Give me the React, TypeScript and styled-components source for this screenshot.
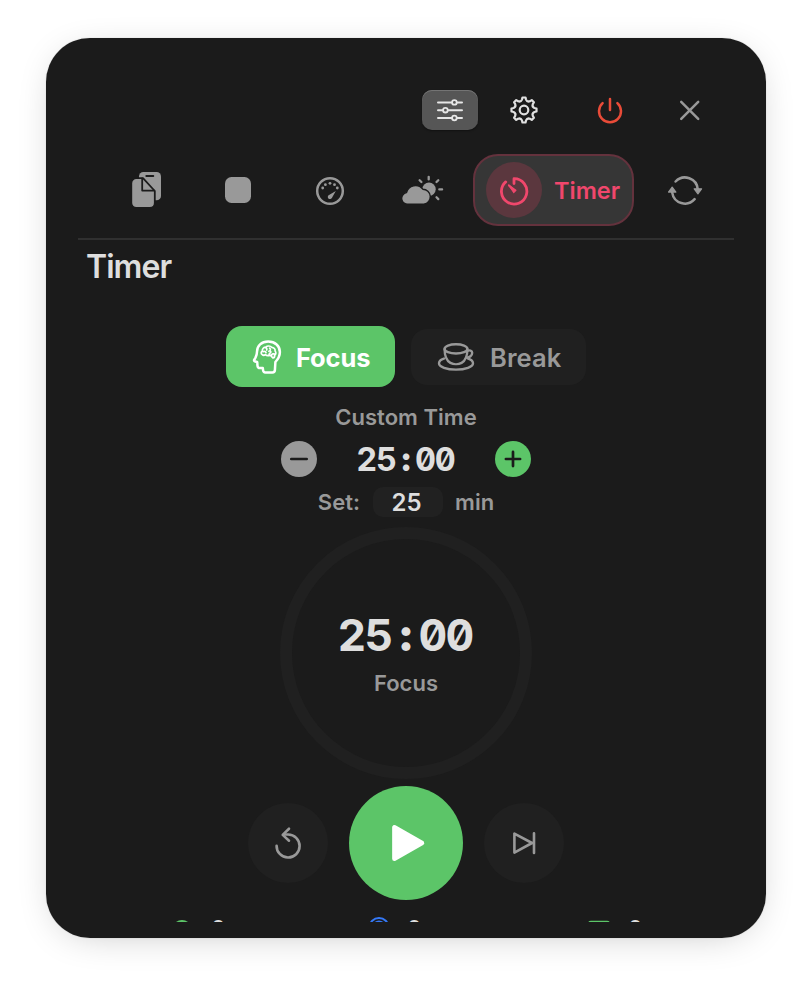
import React from "react";
import styled, { createGlobalStyle } from "styled-components";

const SURFACE = "#1b1b1b";
const MUTED = "#999999";
const BRIGHT = "#dedede";
const GREEN = "#5cc568";
const PINK = "#f0476c";

const GlobalStyle = createGlobalStyle`
  * { box-sizing: border-box; }
  html, body { margin: 0; background: #fff; }
  body { font-family: Inter, "Liberation Sans", sans-serif; overflow: hidden; }
  button { font: inherit; border: 0; padding: 0; background: none; color: inherit; }
`;

const Desktop = styled.div`
  width: 812px;
  height: 992px;
  padding: 38px 46px;
  background: #fff;
  overflow: hidden;
`;

const Window = styled.main`
  width: 720px;
  height: 900px;
  padding: 52px 32px 16px;
  border-radius: 44px;
  background: ${SURFACE};
  display: flex;
  flex-direction: column;
  overflow: hidden;
`;

const Shadow = styled.div`
  width: 720px;
  height: 900px;
  border-radius: 44px;
  box-shadow: 0 0 1px rgba(0, 0, 0, 0.3), 0 6px 40px -16px rgba(0, 0, 0, 0.32);
`;

const Toolbar = styled.header`
  height: 40px;
  flex: none;
  display: flex;
  padding-left: 344px;
`;

const ToolButton = styled.button<{ $active?: boolean; $gap?: number }>`
  width: 56px;
  height: 40px;
  flex: none;
  display: flex;
  align-items: center;
  justify-content: center;
  border-radius: 10px;
  background: ${(p) => (p.$active ? "#565656" : "transparent")};
  box-shadow: ${(p) => (p.$active ? "inset 0 1px 0 #747474, 0 1px 2px rgba(0,0,0,.4)" : "none")};
  margin-left: ${(p) => p.$gap ?? 0}px;
`;

const Tabs = styled.nav`
  height: 72px;
  flex: none;
  margin-top: 24px;
  padding-left: 22px;
  display: flex;
  align-items: center;
`;

const Tab = styled.button<{ $width?: number }>`
  width: ${(p) => p.$width ?? 92}px;
  height: 72px;
  flex: none;
  display: flex;
  align-items: center;
  justify-content: center;
`;

const ActiveTab = styled.button`
  width: 161px;
  height: 72px;
  flex: none;
  margin-left: 3px;
  padding: 0 0 0 11px;
  display: flex;
  align-items: center;
  gap: 12px;
  border: 2px solid #64323d;
  border-radius: 25px;
  background: #363636;
  color: ${PINK};
  font-size: 23.5px;
  font-weight: 600;
`;

const TabBadge = styled.span`
  width: 56px;
  height: 56px;
  flex: none;
  border-radius: 50%;
  background: #5b373e;
  display: flex;
  align-items: center;
  justify-content: center;
`;

const Divider = styled.hr`
  width: 656px;
  height: 2px;
  flex: none;
  margin: 12px 0 0;
  border: 0;
  background: #303030;
`;

const Content = styled.section`
  flex: 1;
  min-height: 0;
  overflow: hidden;
  display: flex;
  flex-direction: column;
  align-items: center;
`;

const Title = styled.h1`
  align-self: stretch;
  flex: none;
  margin: 7px 0 0 8px;
  height: 40px;
  font-size: 32px;
  line-height: 40px;
  font-weight: 600;
  color: ${BRIGHT};
  letter-spacing: -0.95px;
`;

const ModeSwitch = styled.div`
  flex: none;
  margin-top: 39px;
  height: 61px;
  display: flex;
  align-items: center;
  gap: 16px;
`;

const ModeButton = styled.button<{ $active?: boolean }>`
  width: ${(p) => (p.$active ? 169 : 175)}px;
  height: ${(p) => (p.$active ? 61 : 56)}px;
  padding-left: ${(p) => (p.$active ? 25 : 26)}px;
  display: flex;
  align-items: center;
  gap: ${(p) => (p.$active ? 13 : 15)}px;
  border-radius: 16px;
  background: ${(p) => (p.$active ? GREEN : "#202020")};
  color: ${(p) => (p.$active ? "#fff" : MUTED)};
  font-size: 25.5px;
  font-weight: ${(p) => (p.$active ? 700 : 600)};
  letter-spacing: ${(p) => (p.$active ? -0.15 : 0.1)}px;
`;

const ModeLabel = styled.span`
  padding-top: 2px;
`;

const Label = styled.div<{ $top?: number }>`
  flex: none;
  margin-top: ${(p) => p.$top ?? 0}px;
  height: 28px;
  line-height: 28px;
  font-size: 22px;
  font-weight: 600;
  letter-spacing: 0.02px;
  color: ${MUTED};
`;

const Stepper = styled.div`
  flex: none;
  margin-top: 10px;
  width: 250px;
  height: 36px;
  display: flex;
  align-items: center;
  justify-content: space-between;
`;

const RoundButton = styled.button<{ $size: number; $color: string }>`
  width: ${(p) => p.$size}px;
  height: ${(p) => p.$size}px;
  flex: none;
  border-radius: 50%;
  background: ${(p) => p.$color};
  display: flex;
  align-items: center;
  justify-content: center;
`;

const ClockFace = styled.span<{ $size: number; $cell: number; $weight: number }>`
  display: grid;
  grid-template-columns: repeat(5, ${(p) => p.$cell}px);
  justify-items: center;
  font-size: ${(p) => p.$size}px;
  line-height: 1.2;
  font-weight: ${(p) => p.$weight};
  font-feature-settings: "tnum" 1, "zero" 1;
  color: ${BRIGHT};
`;

const Colon = styled.span`
  font-weight: 900;
`;

const SetRow = styled.div`
  flex: none;
  margin-top: 10px;
  height: 30px;
  display: flex;
  align-items: center;
  gap: 12.5px;
`;

const MinuteField = styled.div`
  width: 70px;
  height: 30px;
  border-radius: 10px;
  background: #212121;
  color: ${BRIGHT};
  font-size: 24px;
  line-height: 31px;
  font-weight: 600;
  text-align: center;
  padding-right: 2px;
`;

const Dial = styled.div`
  flex: none;
  margin-top: 10px;
  width: 252px;
  height: 252px;
  border: 12px solid #202020;
  border-radius: 50%;
  display: flex;
  flex-direction: column;
  align-items: center;
  padding-top: 70px;
`;

const Controls = styled.div`
  flex: none;
  margin-top: 7px;
  height: 114px;
  display: flex;
  align-items: center;
  gap: 21px;
`;

const Stats = styled.div`
  flex: none;
  align-self: stretch;
  margin-top: 14px;
  height: 30px;
  display: grid;
  grid-template-columns: 196px 219px 200px;
  padding-left: 94px;
`;

const Stat = styled.div<{ $gap: number }>`
  display: flex;
  align-items: flex-start;
  gap: ${(p) => p.$gap}px;
  color: ${BRIGHT};
  font-size: 22px;
  line-height: 28px;
  font-weight: 600;
`;

const Icon = ({ w, h, children, color = MUTED, sw = 2.2, fill = "none" }: {
  w: number; h: number; children: React.ReactNode; color?: string; sw?: number; fill?: string;
}) => (
  <svg width={w} height={h} viewBox={`0 0 ${w} ${h}`} fill={fill} stroke={color} strokeWidth={sw}
    strokeLinecap="round" strokeLinejoin="round">
    {children}
  </svg>
);

const Clock = ({ value, size, cell, weight }: { value: string; size: number; cell: number; weight: number }) => (
  <ClockFace $size={size} $cell={cell} $weight={weight}>
    {value.split("").map((ch, i) => (ch === ":" ? <Colon key={i}>:</Colon> : <span key={i}>{ch}</span>))}
  </ClockFace>
);

const polar = (deg: number, r: number) => {
  const a = (deg * Math.PI) / 180;
  return `${(14 + r * Math.sin(a)).toFixed(2)} ${(14 - r * Math.cos(a)).toFixed(2)}`;
};

const gearPath =
  Array.from({ length: 8 }, (_, i) => {
    const a = i * 45;
    return `${i ? "L" : "M"}${polar(a - 7, 12.6)}L${polar(a + 7, 12.6)}L${polar(a + 11, 10.6)}Q${polar(a + 22.5, 8.4)} ${polar(a + 34, 10.6)}`;
  }).join("") + "Z";

const SlidersIcon = () => (
  <Icon w={28} h={24} color="#e6e6e6" sw={2}>
    <path d="M2 4.4h24M2 12.2h24M2 20h24" />
    <g fill="#565656" strokeWidth={1.8}>
      <circle cx="18.4" cy="4.4" r="2.3" />
      <circle cx="9.4" cy="12.2" r="2.3" />
      <circle cx="18.4" cy="20" r="2.3" />
    </g>
  </Icon>
);

const GearIcon = () => (
  <Icon w={28} h={28} color="#e0e0e0" sw={2.2}>
    <path d={gearPath} />
    <circle cx="14" cy="14" r="4.3" />
  </Icon>
);

const PowerIcon = () => (
  <Icon w={28} h={28} color="#e94b38" sw={2.5}>
    <path d="M6.6 7.1a11 11 0 1 0 14.8 0M14 3v11" />
  </Icon>
);

const CloseIcon = () => (
  <Icon w={24} h={24} sw={2.5}><path d="M3.2 3.9l17 17M20.2 3.9l-17 17" /></Icon>
);

const DocsIcon = () => (
  <Icon w={32} h={38}>
    <rect x="9" y="1" width="22" height="28.3" rx="4.4" fill={MUTED} stroke="none" />
    <path d="M16.3 5h7" stroke={SURFACE} strokeWidth={1.9} />
    <path d="M6.5 7.2H13L24.8 20V32a5 5 0 0 1-5 5H6.5a5 5 0 0 1-5.2-5V12.2a5 5 0 0 1 5.2-5z"
      fill={MUTED} stroke={SURFACE} strokeWidth={1.8} />
    <path d="M12.2 7.5V19.6H24.3" stroke={SURFACE} strokeWidth={1.8} />
  </Icon>
);

const SquareIcon = () => (
  <Icon w={26} h={26}><rect width="26" height="26" rx="6.5" fill={MUTED} stroke="none" /></Icon>
);

const GaugeIcon = () => (
  <Icon w={30} h={31} sw={2.5}>
    <circle cx="15" cy="16" r="12.8" />
    <g fill={MUTED} stroke="none">
      <circle cx="7.7" cy="13" r="1.4" /><circle cx="10.4" cy="9.7" r="1.4" />
      <circle cx="15" cy="8.3" r="1.4" /><circle cx="19.5" cy="9.7" r="1.4" />
      <circle cx="22.3" cy="13" r="1.4" />
      <path d="M20.8 15.9L17 22.8a2.2 2.2 0 1 1-3.4-2.6z" />
    </g>
  </Icon>
);

const WeatherIcon = () => (
  <Icon w={42} h={30} sw={2.3}>
    <circle cx="27" cy="14.3" r="6.7" fill={MUTED} stroke="none" />
    <path d="M26.7 1.8v2.6M17.6 5.2l1.8 1.8M36.3 5.2l-1.8 1.8M37.300 14.4h2.8M34.500 22.300l1.8 1.8" />
    <path d="M6.5 29.1A5.8 5.8 0 0 1 4.5 17.600A9.200 9.200 0 0 1 20.8 14.2A7.500 7.500 0 0 1 22 29.100z"
      fill={MUTED} stroke={SURFACE} strokeWidth={1.4} />
  </Icon>
);

const TimerIcon = () => (
  <Icon w={32} h={32} color={PINK} sw={2.8}>
    <path d="M7.7 7.9A12.7 12.7 0 1 0 16 4.7V9.5" />
    <path d="M11 11.5l5.2 4.9" strokeWidth={2} />
    <path d="M10.6 11l7.3 5.3-2.2 2.2z" fill={PINK} strokeWidth={1.2} />
  </Icon>
);

const SyncIcon = () => (
  <Icon w={36} h={32} sw={2.5}>
    <path d="M8.6 7.5A12.9 12.9 0 0 1 30.8 15.5M27.6 25.2A12.9 12.9 0 0 1 5.2 18.6" />
    <path d="M27.2 14.8h7.400l-3.700 5zM1.500 18.100h7.400l-3.700-5z" fill={MUTED} strokeWidth={1.2} />
  </Icon>
);

const FocusIcon = () => (
  <Icon w={32} h={36} color="#fff" sw={2.5}>
    <path d="M17.2 2.6C10.5 2.6 6 6.8 6 12.8c0 2.4-.4 3.6-1.5 5.8l-1.3 2.3c-.4.8 0 1.4 1 1.6l2 .5.3 3.8c.2 1.6 1 2.3 2.5 2.3h2.8l.3 2.3c.2 1.4.9 2 2.2 2h7.2c1.4 0 2.3-.8 2.4-2.2l.5-8.2c2.8-3 4.5-6.1 4.5-10C28.9 6.8 24 2.6 17.2 2.6z" />
    <path strokeWidth={1.7} d="M11.2 15.6c-1.5-.8-1.3-3 .1-3.5-.2-2.3 1.5-4 3.5-3.9 1.6-1.7 4.6-1.5 5.9.1 2.3.1 3.7 1.9 3.4 3.7 1.2 1.5.9 3.5-.5 4.1.2 1.5-.5 2.7-1.7 2.9l-2.6-2.8c-2.2.8-3.9.5-5-.6-1 .8-2.2.8-3.1 0zM14.6 8.8c1.2.4 1.5 1.3 1.1 2.2M12 12.7c1.5-.6 2.6-.2 3 .9M18.6 9.2c1.500 1.200.8 2.700-.7 3.100M18 15.200l1.900-2.200M20.500 17c-.2-1.900 1.600-2.600 3-1.900" />
  </Icon>
);

const CupIcon = () => (
  <Icon w={38} h={30} sw={2.4}>
    <path d="M6.9 16.600C3.500 17.600 2 19.400 2 21.300c0 3.500 7.600 6.300 17 6.300s17-2.800 17-6.300c0-1.900-1.500-3.500-4.900-4.600" />
    <ellipse cx="19" cy="6.900" rx="11.400" ry="4.600" />
    <path d="M7.600 7.100c0 6.800 1.200 11.300 5.800 13.800 3.100 1.600 8.100 1.600 11.200 0 4.600-2.500 5.800-7 5.800-13.800" />
    <path d="M30.400 8.900c2-1.100 4.800-.3 4.800 1.900 0 2.700-2.500 4.900-6 4.800" />
  </Icon>
);

const ResetIcon = () => (
  <Icon w={32} h={34} sw={2.6}>
    <path d="M4.6 19.7A11.5 11.5 0 1 0 16 8.5H12" /><path d="M17 2.7L10.7 8.9 17 14.7" />
  </Icon>
);

const SkipIcon = () => (
  <Icon w={28} h={28} sw={2.6}>
    <path d="M4.4 4.6v19L22 14zM24 4.3v19.7" />
  </Icon>
);

const PlayIcon = () => (
  <Icon w={40} h={40} color="#fff" fill="#fff" sw={4.5}>
    <path d="M8.4 4.3v31.400L36 20z" />
  </Icon>
);

const App = () => (
  <Desktop>
    <GlobalStyle />
    <Shadow>
      <Window>
        <Toolbar>
          <ToolButton $active aria-label="Options"><SlidersIcon /></ToolButton>
          <ToolButton $gap={17.5} aria-label="Settings"><GearIcon /></ToolButton>
          <ToolButton $gap={30.5} aria-label="Quit"><PowerIcon /></ToolButton>
          <ToolButton $gap={23.5} aria-label="Close"><CloseIcon /></ToolButton>
        </Toolbar>
        <Tabs>
          <Tab aria-label="Clipboard"><DocsIcon /></Tab>
          <Tab aria-label="Apps"><SquareIcon /></Tab>
          <Tab aria-label="System"><GaugeIcon /></Tab>
          <Tab $width={94} aria-label="Weather"><WeatherIcon /></Tab>
          <ActiveTab><TabBadge><TimerIcon /></TabBadge>Timer</ActiveTab>
          <Tab $width={102} aria-label="Sync"><SyncIcon /></Tab>
        </Tabs>
        <Divider />
        <Content>
          <Title>Timer</Title>
          <ModeSwitch>
            <ModeButton $active><FocusIcon /><ModeLabel>Focus</ModeLabel></ModeButton>
            <ModeButton><CupIcon /><ModeLabel>Break</ModeLabel></ModeButton>
          </ModeSwitch>
          <Label $top={16}>Custom Time</Label>
          <Stepper>
            <RoundButton $size={36} $color={MUTED} aria-label="Decrease">
              <Icon w={20} h={20} color={SURFACE} sw={2.7}><path d="M2.3 10h15.4" /></Icon>
            </RoundButton>
            <Clock value="25:00" size={32.5} cell={19.6} weight={650} />
            <RoundButton $size={36} $color={GREEN} aria-label="Increase">
              <Icon w={20} h={20} color={SURFACE} sw={2.7}><path d="M2.9 10h14.2M10 2.9v14.2" /></Icon>
            </RoundButton>
          </Stepper>
          <SetRow>
            <Label>Set:</Label>
            <MinuteField>25</MinuteField>
            <Label>min</Label>
          </SetRow>
          <Dial>
            <Clock value="25:00" size={44.5} cell={27} weight={750} />
            <Label $top={6.5}>Focus</Label>
          </Dial>
          <Controls>
            <RoundButton $size={80} $color="#202020" aria-label="Reset"><ResetIcon /></RoundButton>
            <RoundButton $size={114} $color={GREEN} aria-label="Start"><PlayIcon /></RoundButton>
            <RoundButton $size={80} $color="#202020" aria-label="Skip"><SkipIcon /></RoundButton>
          </Controls>
          <Stats>
            <Stat $gap={19}>
              <Icon w={20} h={28}><circle cx="10" cy="16" r="10" fill={GREEN} stroke="none" /></Icon>0
            </Stat>
            <Stat $gap={17}>
              <Icon w={22} h={28} color="#3478f6" sw={2}>
                <circle cx="11" cy="13.5" r="9.5" /><circle cx="11" cy="13.5" r="6" />
              </Icon>0
            </Stat>
            <Stat $gap={17}>
              <Icon w={24} h={28} color={GREEN} sw={2}><rect x="2" y="7.7" width="20" height="16" rx="2" /></Icon>0
            </Stat>
          </Stats>
        </Content>
      </Window>
    </Shadow>
  </Desktop>
);

export default App;
